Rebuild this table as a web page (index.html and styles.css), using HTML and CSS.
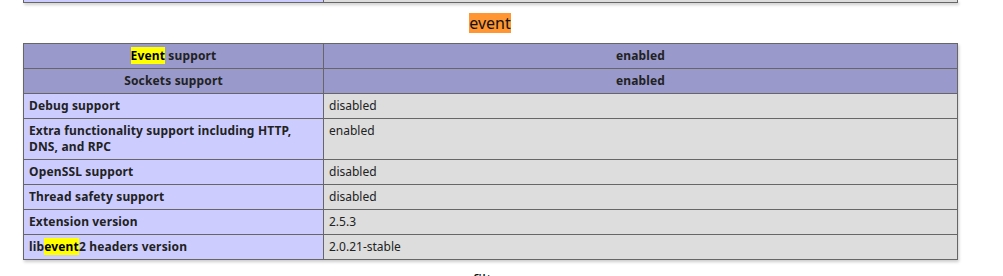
FILE: index.html
```html
<!DOCTYPE html>
<html>
<head>
<meta charset="utf-8">
<link rel="stylesheet" href="styles.css">
</head>
<body>
<div class="page">
  <table class="info prev">
    <colgroup><col class="c1"><col class="c2"></colgroup>
    <tr><td class="e stub"></td><td class="v stub"></td></tr>
  </table>

  <h2 class="mod"><span class="hl-active">event</span></h2>

  <table class="info">
    <colgroup><col class="c1"><col class="c2"></colgroup>
    <tr class="h"><th><span class="hl">Event</span> support</th><th>enabled</th></tr>
    <tr class="h"><th>Sockets support</th><th>enabled</th></tr>
    <tr><td class="e">Debug support</td><td class="v">disabled</td></tr>
    <tr><td class="e">Extra functionality support including HTTP, DNS, and RPC</td><td class="v">enabled</td></tr>
    <tr><td class="e">OpenSSL support</td><td class="v">disabled</td></tr>
    <tr><td class="e">Thread safety support</td><td class="v">disabled</td></tr>
    <tr><td class="e">Extension version</td><td class="v">2.5.3</td></tr>
    <tr><td class="e">lib<span class="hl">event</span>2 headers version</td><td class="v">2.0.21-stable</td></tr>
  </table>

  <h2 class="mod">filter</h2>
</div>
</body>
</html>
```

FILE: styles.css
```css
html, body {
  margin: 0;
  padding: 0;
  background: #fff;
}

body {
  color: #222;
  font-family: "Noto Sans", "Open Sans", sans-serif;
  overflow: hidden;
}

.page {
  width: 934px;
  margin-left: 23px;
}

.info {
  width: 934px;
  border-collapse: collapse;
  table-layout: fixed;
  box-shadow: 1px 2px 3px #ccc;
}

.info col.c1 { width: 300px; }
.info col.c2 { width: 634px; }

.info td,
.info th {
  border: 1px solid #666;
  font-size: 12px;
  line-height: 16px;
  padding: 4px 5px;
  vertical-align: top;
  text-align: left;
}

.info .h th {
  background: #99c;
  font-weight: bold;
  letter-spacing: 0.15px;
  text-align: center;
}

.info .e {
  background: #ccf;
  font-weight: bold;
  letter-spacing: 0.15px;
}

.info .v {
  background: #ddd;
}

.prev td.stub {
  border-top: none;
  padding: 0;
  height: 2px;
}

.mod {
  margin: 10px 0;
  text-align: center;
  font-size: 16px;
  font-weight: normal;
  line-height: 20px;
  height: 20px;
  color: #111;
}

.hl-active {
  display: inline-block;
  background: #ff9632;
  height: 20px;
  line-height: 20px;
}

.hl {
  background: #ff0;
  color: #000;
}
```
